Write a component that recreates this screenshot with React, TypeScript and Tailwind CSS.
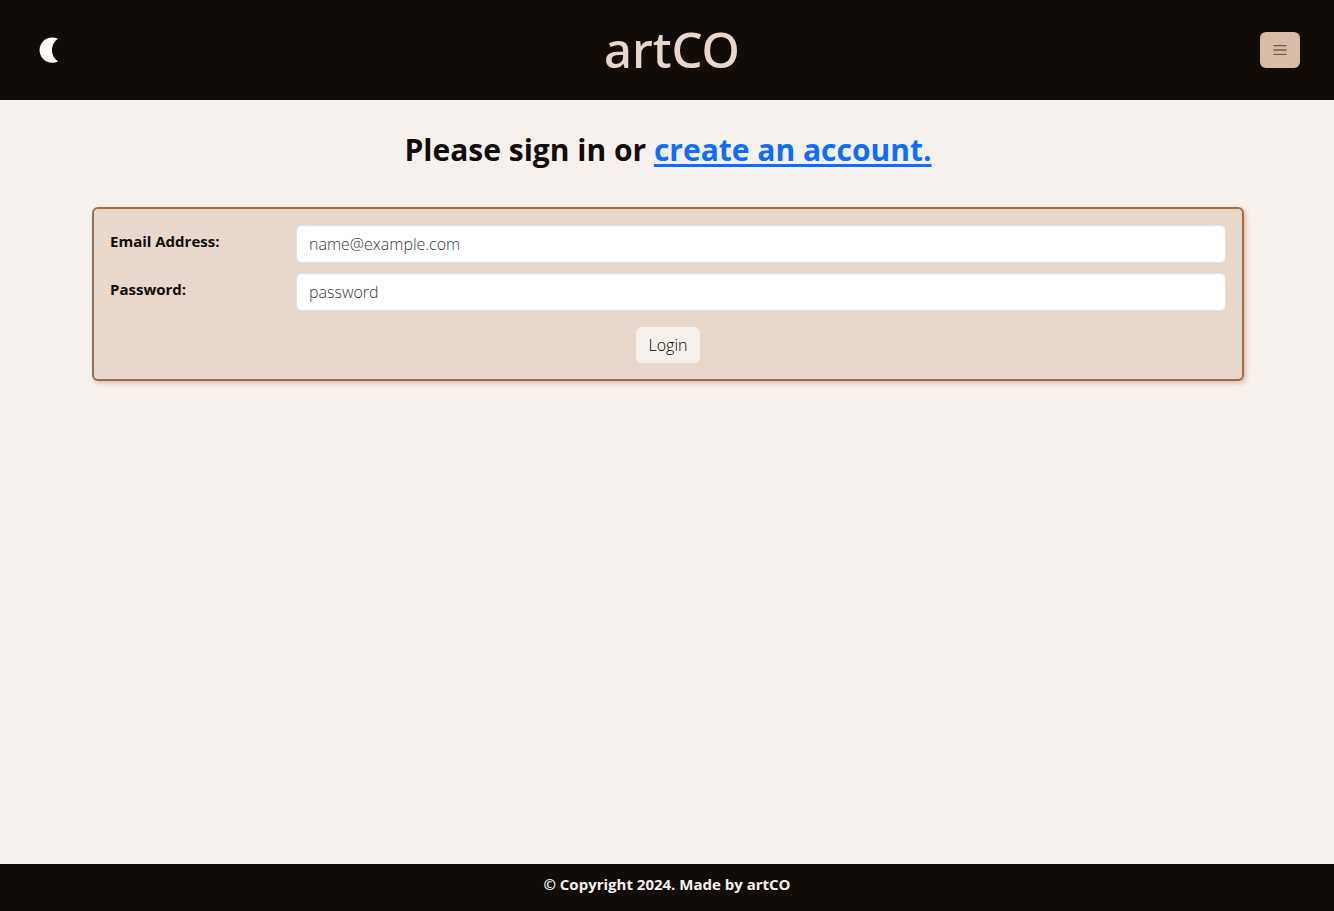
import React from "react";

function MoonIcon() {
  return (
    <svg width="20" height="26" viewBox="0 0 20 26" fill="currentColor" aria-hidden="true">
      <path d="M19 1.8A12.7 12.7 0 1 0 19 24.4C15.4 22 13 17.8 13 13.1C13 8.4 15.4 4.2 19 1.8Z" />
    </svg>
  );
}

function MenuIcon() {
  return (
    <svg
      width="16"
      height="16"
      viewBox="0 0 16 16"
      stroke="currentColor"
      strokeWidth="1.4"
      strokeLinecap="round"
      aria-hidden="true"
    >
      <path d="M2 3.6h12M2 8h12M2 12.4h12" />
    </svg>
  );
}

function Header() {
  return (
    <header className="flex h-[100px] items-center justify-between bg-[#110c08] pl-[14px] pr-[34px]">
      <button type="button" aria-label="Toggle theme" className="flex h-12 w-[70px] items-center justify-center text-white">
        <MoonIcon />
      </button>
      <div className="pb-[2px] text-[49px] leading-[60px] font-medium font-['Noto_Sans','Open_Sans',sans-serif] text-[#e8d8cb]">
        artCO
      </div>
      <button
        type="button"
        aria-label="Open menu"
        className="flex h-9 w-10 items-center justify-center rounded-md bg-[#d7bca7] text-[#665c55]"
      >
        <MenuIcon />
      </button>
    </header>
  );
}

type FieldProps = {
  id: string;
  label: string;
  type: string;
  placeholder: string;
};

function Field({ id, label, type, placeholder }: FieldProps) {
  return (
    <div className="grid grid-cols-[1fr_5fr] items-start">
      <label htmlFor={id} className="pt-1 text-[15px] leading-6 font-bold">
        {label}
      </label>
      <input
        id={id}
        type={type}
        placeholder={placeholder}
        className="h-[38px] w-full min-w-0 rounded-md border border-[#dee2e6] bg-white px-3 text-base font-light placeholder:text-[#33383d] placeholder:opacity-100"
      />
    </div>
  );
}

export default function App() {
  return (
    <div className="flex min-h-screen flex-col bg-[#f7f1ed] font-['Open_Sans','Noto_Sans',sans-serif] text-[#110c08]">
      <Header />
      <main className="flex-1 pt-8 pr-[90px] pl-[92px]">
        <h1 className="text-center text-[30px] leading-9 font-bold">
          Please sign in or{" "}
          <a href="#create" className="text-[#0d6efd] underline decoration-3 underline-offset-3">
            create an account.
          </a>
        </h1>
        <form
          className="mt-[39px] flex flex-col gap-[10px] rounded-md border-2 border-[#9f6c46] bg-[#e8d8cb] p-4 shadow-[2px_2px_5px_#d7bca7]"
          onSubmit={(e) => e.preventDefault()}
        >
          <Field id="email" label="Email Address:" type="email" placeholder="name@example.com" />
          <Field id="password" label="Password:" type="password" placeholder="password" />
          <button
            type="submit"
            className="mt-[6px] h-9 w-16 self-center rounded-md bg-[#f7f1ed] text-base font-light text-black"
          >
            Login
          </button>
        </form>
      </main>
      <footer className="h-[47px] bg-[#110c08] pt-2 text-center text-[15px] leading-6 font-bold text-[#f7f1ed]">
        © Copyright 2024. Made by artCO
      </footer>
    </div>
  );
}
